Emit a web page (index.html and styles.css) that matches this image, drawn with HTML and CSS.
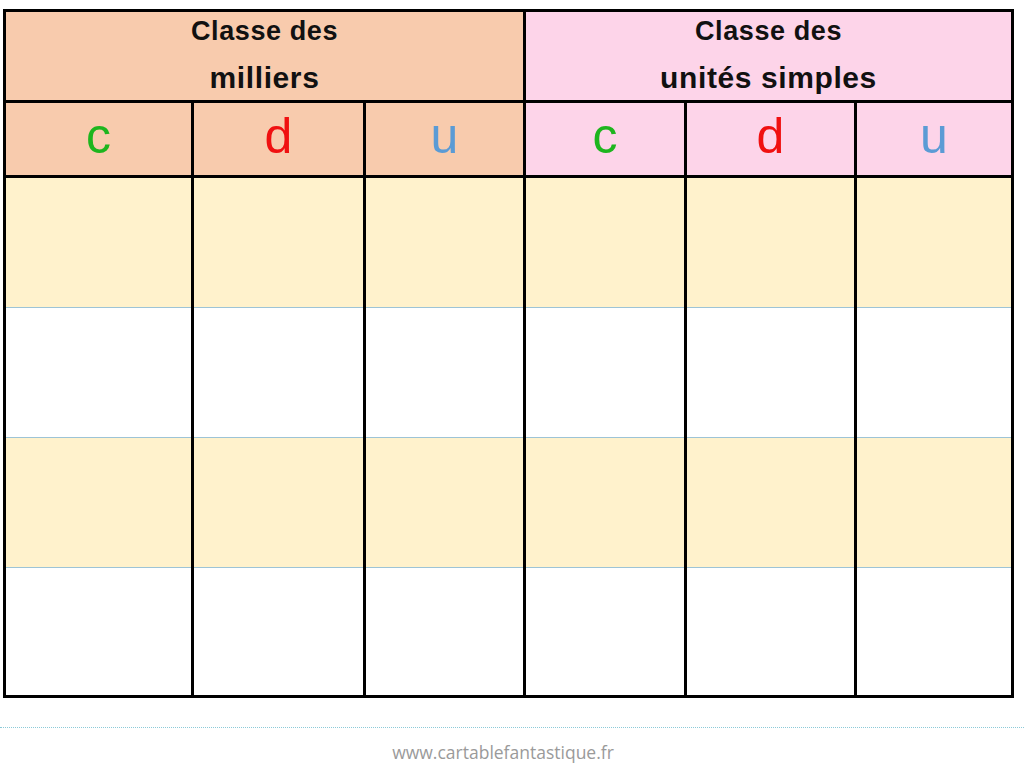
FILE: index.html
```html
<!DOCTYPE html>
<html lang="fr">
<head>
<meta charset="utf-8">
<title>Tableau de numération</title>
<link rel="stylesheet" href="styles.css">
</head>
<body>
<div class="sheet">
  <div class="cls cls-mil"><span class="l1">Classe des</span><span class="l2">milliers</span></div>
  <div class="cls cls-uni"><span class="l1">Classe des</span><span class="l2">unités simples</span></div>

  <div class="rank mil c">c</div>
  <div class="rank mil d">d</div>
  <div class="rank mil u">u</div>
  <div class="rank uni c">c</div>
  <div class="rank uni d">d</div>
  <div class="rank uni u">u</div>

  <div class="cell row1 tint"></div><div class="cell row1 tint"></div><div class="cell row1 tint"></div>
  <div class="cell row1 tint"></div><div class="cell row1 tint"></div><div class="cell row1 tint"></div>

  <div class="cell row2"></div><div class="cell row2"></div><div class="cell row2"></div>
  <div class="cell row2"></div><div class="cell row2"></div><div class="cell row2"></div>

  <div class="cell row3 tint"></div><div class="cell row3 tint"></div><div class="cell row3 tint"></div>
  <div class="cell row3 tint"></div><div class="cell row3 tint"></div><div class="cell row3 tint"></div>

  <div class="cell row4"></div><div class="cell row4"></div><div class="cell row4"></div>
  <div class="cell row4"></div><div class="cell row4"></div><div class="cell row4"></div>
</div>
<footer class="foot">
  <p class="site">www.cartablefantastique.fr</p>
</footer>
</body>
</html>
```
FILE: styles.css
```css
html, body {
  margin: 0;
  padding: 0;
  background: #ffffff;
}

body {
  font-family: "Liberation Sans", Arial, sans-serif;
  width: 1024px;
}

.sheet {
  box-sizing: border-box;
  width: 1011px;
  margin: 9px 0 0 3px;
  border: 3px solid #000;
  background: #000;
  display: grid;
  grid-template-columns: 185px 169px 157px 158px 167px 154px;
  grid-template-rows: 91px 75px 129px 130px 130px 128px;
  column-gap: 3px;
}

.cls {
  grid-column: span 3;
  border-bottom: 3px solid #000;
  display: flex;
  flex-direction: column;
  align-items: center;
  gap: 9px;
  font-weight: bold;
  line-height: 38px;
  color: #111;
}

.cls .l1 {
  font-size: 27px;
  letter-spacing: 0.6px;
}

.cls .l2 {
  font-size: 30px;
  letter-spacing: 0.6px;
}

.cls-mil { background: #f8cbad; }
.cls-uni { background: #fdd4e9; }

.rank {
  border-bottom: 3px solid #000;
  text-align: center;
  font-size: 50px;
  line-height: 66px;
}

.rank.mil { background: #f8cbad; }
.rank.uni { background: #fdd4e9; }
.rank.c { color: #1eb51e; }
.rank.d { color: #f01010; }
.rank.u { color: #5b9bd5; }

.cell { background: #fff; }
.cell.tint { background: #fff2cc; }
.row2, .row3, .row4 { border-top: 1px solid #9dc4d6; }

.foot {
  margin-top: 29px;
  border-top: 1px dotted #8ccad8;
}

.site {
  margin: 0;
  padding: 13px 18px 0 0;
  text-align: center;
  font-family: "Open Sans", "Liberation Sans", sans-serif;
  font-size: 17.5px;
  line-height: 22px;
  color: #9a9a9a;
}
```
